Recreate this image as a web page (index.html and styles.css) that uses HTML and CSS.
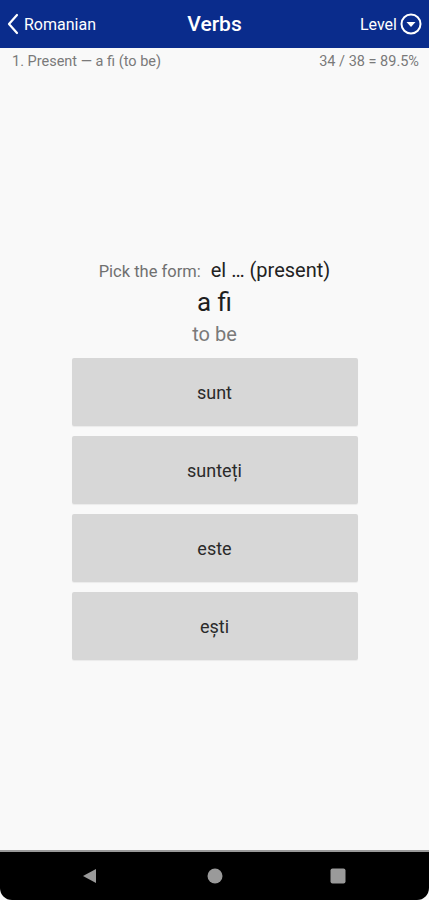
FILE: index.html
```html
<!DOCTYPE html>
<html lang="en">
<head>
    <meta charset="UTF-8">
    <meta name="viewport" content="width=device-width, initial-scale=1.0">
    <title>Verbs</title>
    <link rel="stylesheet" href="styles.css">
</head>
<body>
    <div class="screen">
        <div class="top-bar">
            <div class="back">
                <svg width="14" height="22" viewBox="0 0 14 22"><path d="M11 2 L3 11 L11 20" fill="none" stroke="#fff" stroke-width="2.2" stroke-linecap="round" stroke-linejoin="round"/></svg>
                <span>Romanian</span>
            </div>
            <div class="title">Verbs</div>
            <div class="level">
                <span>Level</span>
                <svg width="22" height="22" viewBox="0 0 22 22"><circle cx="11" cy="11" r="9.5" fill="none" stroke="#fff" stroke-width="2"/><path d="M6.5 9 L15.5 9 L11 14 Z" fill="#fff"/></svg>
            </div>
        </div>
        <div class="status">
            <span>1. Present — a fi (to be)</span>
            <span>34 / 38 = 89.5%</span>
        </div>
        <div class="quiz">
            <div class="prompt"><span class="prompt-label">Pick the form:</span><span class="prompt-form">el … (present)</span></div>
            <div class="verb">a fi</div>
            <div class="meaning">to be</div>
            <div class="answers">
                <button class="answer">sunt</button>
                <button class="answer">sunteți</button>
                <button class="answer">este</button>
                <button class="answer">ești</button>
            </div>
        </div>
        <div class="nav-bar">
            <svg width="18" height="18" viewBox="0 0 18 18"><path d="M15 2 L15 16 L2 9 Z" fill="#9a9a9a"/></svg>
            <svg width="16" height="16" viewBox="0 0 16 16"><circle cx="8" cy="8" r="7.5" fill="#9a9a9a"/></svg>
            <svg width="16" height="16" viewBox="0 0 16 16"><rect x="0.5" y="0.5" width="15" height="15" rx="2" fill="#9a9a9a"/></svg>
        </div>
    </div>
</body>
</html>
```

FILE: styles.css
```css
body {
    margin: 0;
    font-family: Roboto, "Noto Sans", sans-serif;
    background-color: #f9f9f9;
}
.screen {
    height: 900px;
    display: flex;
    flex-direction: column;
}
.top-bar {
    height: 48px;
    background-color: #0a2c8c;
    color: #fff;
    display: flex;
    align-items: center;
    justify-content: space-between;
    padding: 0 7px 0 6px;
    position: relative;
}
.back {
    display: flex;
    align-items: center;
    gap: 4px;
    font-size: 16px;
}
.title {
    position: absolute;
    left: 0;
    right: 0;
    text-align: center;
    font-size: 21px;
    font-weight: 500;
    pointer-events: none;
}
.level {
    display: flex;
    align-items: center;
    gap: 3px;
    font-size: 16px;
}
.status {
    display: flex;
    justify-content: space-between;
    height: 26px;
    line-height: 26px;
    padding: 1px 10px 0 12px;
    font-size: 14.5px;
    color: #7a7a7a;
}
.quiz {
    flex: 1;
    display: flex;
    flex-direction: column;
    align-items: center;
    padding-top: 182px;
}
.prompt {
    display: flex;
    align-items: baseline;
    gap: 10px;
    height: 26px;
    line-height: 26px;
}
.prompt-label {
    font-size: 16.5px;
    color: #707070;
}
.prompt-form {
    font-size: 20px;
    color: #222;
}
.verb {
    font-size: 26px;
    line-height: 32px;
    color: #1e1e1e;
    margin-top: 3px;
}
.meaning {
    font-size: 20px;
    line-height: 28px;
    color: #7a7a7a;
    margin-top: 2px;
}
.answers {
    display: flex;
    flex-direction: column;
    gap: 10px;
    margin-top: 10px;
}
.answer {
    width: 286px;
    height: 68px;
    border: none;
    border-radius: 2px;
    background-color: #d7d7d7;
    font-family: Roboto, "Noto Sans", sans-serif;
    font-size: 18px;
    color: #2a2a2a;
    box-shadow: 0 1px 1px rgba(0, 0, 0, 0.06);
}
.nav-bar {
    height: 48px;
    background-color: #000;
    border-top: 2px solid #9a9a9a;
    border-radius: 0 0 12px 12px;
    display: flex;
    align-items: center;
    justify-content: space-between;
    padding: 0 83px 0 81px;
}
```
